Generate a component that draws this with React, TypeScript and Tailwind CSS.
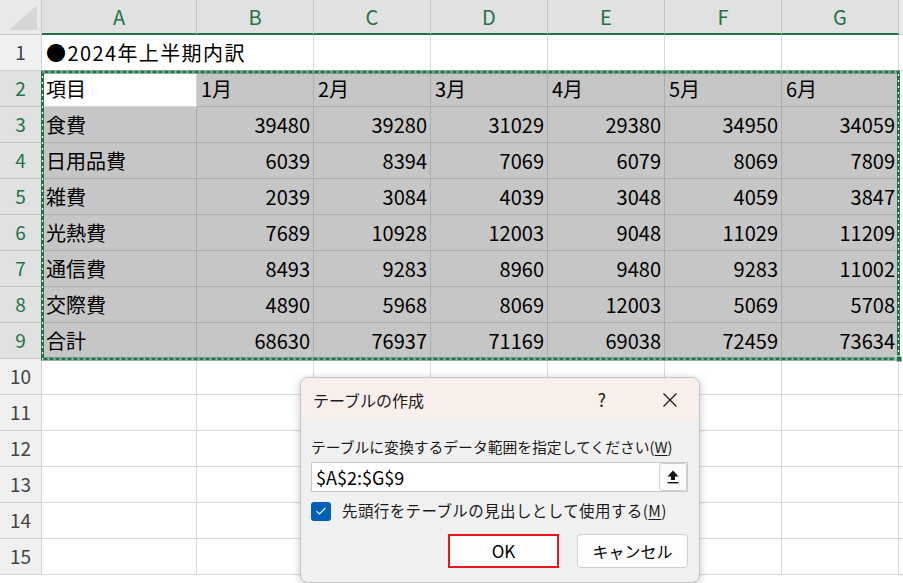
import React from 'react'

const COLS = ['A', 'B', 'C', 'D', 'E', 'F', 'G']
const COL_W = ['w-[155px]', 'w-[117px]', 'w-[117px]', 'w-[117px]', 'w-[117px]', 'w-[117px]', 'w-[117px]']

type Cell = string | number
const DATA: Cell[][] = [
  ['●2024年上半期内訳', '', '', '', '', '', ''],
  ['項目', '1月', '2月', '3月', '4月', '5月', '6月'],
  ['食費', 39480, 39280, 31029, 29380, 34950, 34059],
  ['日用品費', 6039, 8394, 7069, 6079, 8069, 7809],
  ['雑費', 2039, 3084, 4039, 3048, 4059, 3847],
  ['光熱費', 7689, 10928, 12003, 9048, 11029, 11209],
  ['通信費', 8493, 9283, 8960, 9480, 9283, 11002],
  ['交際費', 4890, 5968, 8069, 12003, 5069, 5708],
  ['合計', 68630, 76937, 71169, 69038, 72459, 73634],
  ['', '', '', '', '', '', ''],
  ['', '', '', '', '', '', ''],
  ['', '', '', '', '', '', ''],
  ['', '', '', '', '', '', ''],
  ['', '', '', '', '', '', ''],
  ['', '', '', '', '', '', ''],
]

function HeaderRow() {
  return (
    <div className="flex h-[35px]">
      {/* 左上の角 */}
      <div className="w-[42px] h-[35px] bg-[#e9e9e9] border-r border-b border-[#c8c8c8] relative">
        <svg className="absolute inset-0" width="41" height="34" viewBox="0 0 41 34">
          <polygon points="9,30 37,30 37,5" fill="#d6d6d6" />
        </svg>
      </div>
      {COLS.map((c, i) => (
        <div
          key={c}
          className={`${COL_W[i]} h-[35px] bg-[#e1e1e1] border-r border-[#c6c6c6] border-b-2 border-b-[#217346] flex items-center justify-center text-[20px] text-[#217346]`}
        >
          {c}
        </div>
      ))}
      <div className="flex-1 h-[35px] bg-[#e9e9e9] border-b border-[#c8c8c8]" />
    </div>
  )
}

function SheetRow({ r, cells }: { r: number; cells: Cell[] }) {
  const selected = r >= 2 && r <= 9
  return (
    <div className="flex h-[36px]">
      <div
        className={`w-[42px] h-[36px] border-r border-b flex items-center justify-center text-[19px] ${
          selected
            ? 'bg-[#e1e1e1] border-[#c6c6c6] text-[#217346]'
            : 'bg-[#f0f0f0] border-[#d2d2d2] text-[#444]'
        }`}
      >
        {r}
      </div>
      {cells.map((v, i) => {
        const active = r === 2 && i === 0
        const grey = selected && !active
        const overflow = r === 1 && i === 0
        const isNum = typeof v === 'number'
        return (
          <div
            key={i}
            className={`${COL_W[i]} h-[36px] border-b flex items-center text-[20px] text-black whitespace-nowrap ${
              overflow ? 'tracking-[1.4px]' : 'border-r'
            } ${grey ? 'bg-[#c6c6c6] border-[#adadad]' : 'bg-white border-[#d9d9d9]'} ${
              isNum ? 'justify-end pr-[3px]' : 'pl-[4px]'
            }`}
          >
            <span className="relative z-10">{v}</span>
          </div>
        )
      })}
      <div className="flex-1 h-[36px] bg-white border-b border-[#d9d9d9]" />
    </div>
  )
}

function CreateTableDialog() {
  return (
    <div className="absolute left-[300px] top-[377px] w-[400px] h-[206px] rounded-[8px] border border-[#c4c4c4] bg-[#f0f0f0] shadow-[0_2px_10px_rgba(0,0,0,0.22)] overflow-hidden">
      {/* タイトルバー */}
      <div className="h-[43px] bg-[#f8efea] flex items-center pl-[12px] pr-[21px]">
        <span className="text-[16px] text-[#1a1a1a]">テーブルの作成</span>
        <span className="ml-auto text-[18px] text-[#1a1a1a] mr-[56px]">?</span>
        <svg width="16" height="16" viewBox="0 0 16 16">
          <path d="M1.5 1.5 L14.5 14.5 M14.5 1.5 L1.5 14.5" stroke="#1a1a1a" strokeWidth="1.3" />
        </svg>
      </div>

      <div className="px-[10px] pt-[15px] flex flex-col">
        <p className="text-[14.8px] leading-[22px] text-[#1a1a1a] whitespace-nowrap">
          テーブルに変換するデータ範囲を指定してください(<span className="underline underline-offset-2">W</span>)
        </p>

        <div className="mt-[4px] h-[30px] w-[377px] bg-white border border-[#c8c8c8] flex items-center">
          <span className="pl-[4px] text-[18px] text-black flex-1">$A$2:$G$9</span>
          <div className="w-[28px] h-[28px] bg-[#fbfbfb] border border-[#d0d0d0] rounded-[3px] flex items-center justify-center">
            <svg width="14" height="16" viewBox="0 0 14 16">
              <path d="M7 1.5 L12.5 7.5 L9 7.5 L9 11 L5 11 L5 7.5 L1.5 7.5 Z" fill="#111" />
              <rect x="1.5" y="13" width="11" height="1.4" fill="#111" />
            </svg>
          </div>
        </div>

        <div className="mt-[9px] h-[20px] flex items-center">
          <div className="w-[20px] h-[19px] rounded-[3px] bg-[#005fb8] flex items-center justify-center">
            <svg width="12" height="10" viewBox="0 0 12 10">
              <path d="M1.5 5.2 L4.5 8 L10.5 1.8" stroke="white" strokeWidth="1.1" fill="none" />
            </svg>
          </div>
          <span className="ml-[11px] text-[15.5px] tracking-[0.4px] text-[#1a1a1a] whitespace-nowrap">
            先頭行をテーブルの見出しとして使用する(<span className="underline underline-offset-2">M</span>)
          </span>
        </div>

        <div className="mt-[13px] flex justify-end gap-[18px] pr-[1px]">
          <div className="w-[111px] h-[34px] border-2 border-[#e8161a] bg-[#fdfdfd] flex items-center justify-center text-[17px] text-black">
            OK
          </div>
          <div className="w-[111px] h-[34px] rounded-[4px] border border-[#d0d0d0] bg-[#fdfdfd] flex items-center justify-center text-[16px] text-black">
            キャンセル
          </div>
        </div>
      </div>
    </div>
  )
}

export default function App() {
  return (
    <div className="relative w-[903px] h-[583px] overflow-hidden bg-white font-['Noto_Sans_CJK_JP','Liberation_Sans',sans-serif]">
      <HeaderRow />
      {DATA.map((cells, i) => (
        <SheetRow key={i} r={i + 1} cells={cells} />
      ))}

      {/* 選択範囲の点線 */}
      <svg className="absolute left-0 top-0 z-20 pointer-events-none" width="903" height="583">
        <rect x="42.5" y="72" width="856" height="287" fill="none" stroke="#217346" strokeWidth="3" />
        <rect x="42.5" y="72" width="856" height="287" fill="none" stroke="white" strokeWidth="1.2" strokeDasharray="2 4" />
        <rect x="896" y="356" width="6" height="6" fill="#217346" stroke="white" strokeWidth="1" />
      </svg>

      <div className="absolute inset-0 z-30 pointer-events-none">
        <CreateTableDialog />
      </div>
    </div>
  )
}
